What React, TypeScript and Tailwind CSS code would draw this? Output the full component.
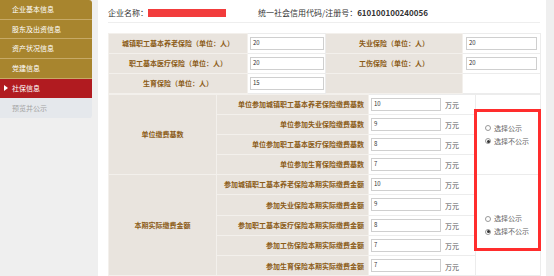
import React from 'react';

const menu = [
  { label: '企业基本信息' },
  { label: '股东及出资信息' },
  { label: '资产状况信息' },
  { label: '党建信息' },
  { label: '社保信息', active: true },
  { label: '预览并公示', muted: true },
];

const baseRows = [
  { label: '单位参加城镇职工基本养老保险缴费基数', value: '10' },
  { label: '单位参加失业保险缴费基数', value: '9' },
  { label: '单位参加职工基本医疗保险缴费基数', value: '8' },
  { label: '单位参加生育保险缴费基数', value: '7' },
];

const paidRows = [
  { label: '参加城镇职工基本养老保险本期实际缴费金额', value: '10' },
  { label: '参加失业保险本期实际缴费金额', value: '9' },
  { label: '参加职工基本医疗保险本期实际缴费金额', value: '8' },
  { label: '参加工伤保险本期实际缴费金额', value: '7' },
  { label: '参加生育保险本期实际缴费金额', value: '7' },
];

const Field = ({ value, w }: { value: string; w: string }) => (
  <div className={`${w} h-[13px] border border-[#cfcfcf] bg-white px-[2px] text-[6px] leading-[9px] text-[#333]`}>
    {value}
  </div>
);

const Radio = ({ checked, label }: { checked?: boolean; label: string }) => (
  <div className="flex items-center gap-[3px] h-[13px]">
    <span className="w-[6px] h-[6px] rounded-full border border-[#999] bg-white flex items-center justify-center">
      {checked && <span className="w-[3px] h-[3px] rounded-full bg-[#333]" />}
    </span>
    <span className="text-[7px] text-[#666]">{label}</span>
  </div>
);

const RadioGroup = () => (
  <div className="flex flex-col pl-[9px]">
    <Radio label="选择公示" />
    <Radio checked label="选择不公示" />
  </div>
);

const labelCell = 'bg-[#e9e4de] text-[#8c5c17] font-bold text-[7px] border border-[#f3f0ec]';
const plainCell = 'bg-white border border-[#ececec]';

export default function App() {
  return (
    <div
      className="w-[554px] h-[276px] overflow-hidden bg-[#efefef] flex"
      style={{ fontFamily: '"Noto Sans CJK SC", "Noto Sans", sans-serif' }}
    >
      <aside className="w-[92px] shrink-0 self-start rounded-r-[3px] overflow-hidden">
        {menu.map((item) => (
          <div
            key={item.label}
            className={`relative h-[19.7px] flex items-center pl-[12px] text-[7px] border-b ${
              item.active
                ? 'bg-[#b11b20] text-white border-[#b11b20]'
                : item.muted
                ? 'bg-[#e5e8ec] text-[#a4a4a4] border-[#e5e8ec]'
                : 'bg-[#a8852e] text-white border-[#c7aa66]'
            }`}
          >
            {item.active && (
              <span className="absolute left-[4px] top-1/2 -translate-y-1/2 w-0 h-0 border-y-[3px] border-y-transparent border-l-[4px] border-l-white" />
            )}
            {item.label}
          </div>
        ))}
      </aside>

      <main className="ml-[6px] w-[448px] shrink-0 bg-white pl-[10px] pr-[6px]">
        <div className="h-[23px] pt-[3px] flex items-center border-b border-[#eeeeee] text-[8px] text-[#333]">
          <span>企业名称：</span>
          <span className="w-[78px] h-[8px] bg-[#f23c3c]" />
          <span className="ml-[32px]">统一社会信用代码/注册号：</span>
          <span className="font-bold">610100100240056</span>
        </div>

        <table className="mt-[10px] w-[432px] border-collapse table-fixed">
          <colgroup>
            <col className="w-[139px]" />
            <col className="w-[78px]" />
            <col className="w-[137px]" />
            <col className="w-[78px]" />
          </colgroup>
          <tbody>
            <tr className="h-[20px]">
              <td className={`${labelCell} text-center`}>城镇职工基本养老保险（单位：人）</td>
              <td className={`${plainCell} pl-[2px]`}><Field value="20" w="w-[74px]" /></td>
              <td className={`${labelCell} text-center`}>失业保险（单位：人）</td>
              <td className={`${plainCell} pl-[3px]`}><Field value="20" w="w-[71px]" /></td>
            </tr>
            <tr className="h-[20px]">
              <td className={`${labelCell} text-center`}>职工基本医疗保险（单位：人）</td>
              <td className={`${plainCell} pl-[2px]`}><Field value="20" w="w-[74px]" /></td>
              <td className={`${labelCell} text-center`}>工伤保险（单位：人）</td>
              <td className={`${plainCell} pl-[3px]`}><Field value="20" w="w-[71px]" /></td>
            </tr>
            <tr className="h-[20px]">
              <td className={`${labelCell} text-center`}>生育保险（单位：人）</td>
              <td className={`${plainCell} pl-[2px]`}><Field value="15" w="w-[74px]" /></td>
              <td className={labelCell} />
              <td className={plainCell} />
            </tr>
          </tbody>
        </table>

        <div className="relative">
          <table className="w-[432px] border-collapse table-fixed">
            <colgroup>
              <col className="w-[108px]" />
              <col className="w-[152px]" />
              <col className="w-[107px]" />
              <col className="w-[65px]" />
            </colgroup>
            <tbody>
              {baseRows.map((row, i) => (
                <tr key={row.label} className="h-[20px]">
                  {i === 0 && (
                    <td rowSpan={4} className={`${labelCell} text-center`}>单位缴费基数</td>
                  )}
                  <td className={`${labelCell} text-right pr-[4px]`}>{row.label}</td>
                  <td className={`${plainCell} pl-[2px]`}>
                    <div className="flex items-center gap-[4px]">
                      <Field value={row.value} w="w-[70px]" />
                      <span className="text-[7px] text-[#555] pt-[2px]">万元</span>
                    </div>
                  </td>
                  {i === 0 && (
                    <td rowSpan={4} className={plainCell}><RadioGroup /></td>
                  )}
                </tr>
              ))}
              {paidRows.map((row, i) => (
                <tr key={row.label} className="h-[20.3px]">
                  {i === 0 && (
                    <td rowSpan={5} className={`${labelCell} text-center`}>本期实际缴费金额</td>
                  )}
                  <td className={`${labelCell} text-right pr-[4px]`}>{row.label}</td>
                  <td className={`${plainCell} pl-[2px]`}>
                    <div className="flex items-center gap-[4px]">
                      <Field value={row.value} w="w-[70px]" />
                      <span className="text-[7px] text-[#555] pt-[2px]">万元</span>
                    </div>
                  </td>
                  {i === 0 && (
                    <td rowSpan={5} className={plainCell}><RadioGroup /></td>
                  )}
                </tr>
              ))}
            </tbody>
          </table>
          <div className="absolute left-[366px] top-[15px] w-[67px] h-[142px] border-[3px] border-[#ff2d2d] pointer-events-none" />
        </div>
      </main>
    </div>
  );
}
